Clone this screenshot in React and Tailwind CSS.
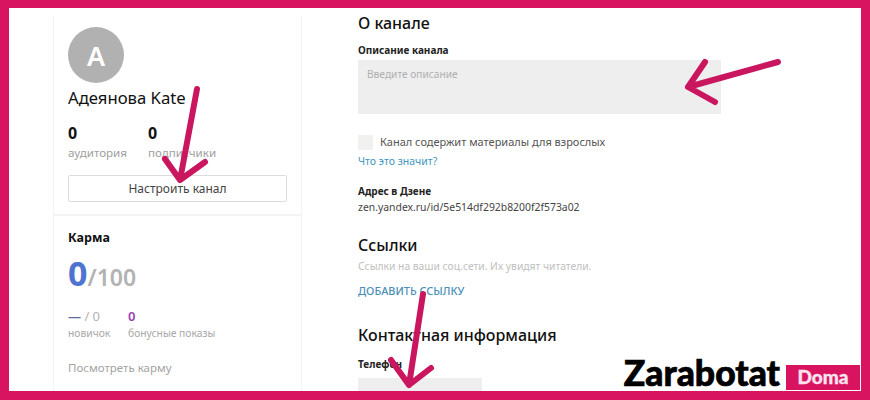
export default function App() {
  return (
    <div className="relative w-[870px] h-[400px] overflow-hidden bg-[#d81460] pt-[8px] pl-[9px] pr-[9px] pb-[9px] font-['Noto_Sans',sans-serif]">
      <div className="relative flex w-full h-full overflow-hidden bg-white">
        <aside className="ml-[44px] mt-[7px] w-[249px] h-[376px] shrink-0 border-x border-[#f3f3f3]">
          <div className="h-[201px] border-b-2 border-[#f3f3f3] pl-[14px] pr-[14px] pt-[12px]">
            <div className="w-[56px] h-[56px] rounded-full bg-[#b1b1b1] flex items-center justify-center text-white text-[27px] font-semibold leading-none">А</div>
            <div className="mt-[5px] text-[16.7px] leading-[20px] text-[#111]">Адеянова Kate</div>
            <div className="mt-[15px] flex">
              <div className="w-[80px]">
                <div className="text-[16px] leading-[20px] font-bold text-[#111]">0</div>
                <div className="mt-[2px] text-[11.6px] leading-[16px] text-[#a0a0a0]">аудитория</div>
              </div>
              <div>
                <div className="text-[16px] leading-[20px] font-bold text-[#111]">0</div>
                <div className="mt-[2px] text-[11.6px] leading-[16px] text-[#a0a0a0]">подписчики</div>
              </div>
            </div>
            <div className="mt-[14px] w-[219px] h-[27px] rounded-[2px] border border-[#dcdcdc] flex items-center justify-center text-[12px] text-[#444]">Настроить канал</div>
          </div>
          <div className="pl-[14px] pt-[13px]">
            <div className="text-[12.5px] leading-[18px] font-bold text-[#111]">Карма</div>
            <div className="mt-[4px] flex items-baseline h-[44px] leading-[44px]">
              <span className="text-[34px] font-bold text-[#4f74d0]">0</span>
              <span className="text-[23px] font-semibold text-[#b3b3b3]">/100</span>
            </div>
            <div className="mt-[12px] flex">
              <div className="w-[60px]">
                <div className="text-[13px] leading-[18px] text-[#b3b3b3]"><span className="text-[#5a6f9e] font-bold">—</span> / 0</div>
                <div className="text-[10.3px] leading-[16px] text-[#a8a8a8]">новичок</div>
              </div>
              <div>
                <div className="text-[13px] leading-[18px] font-semibold text-[#9b3fb5]">0</div>
                <div className="text-[10.3px] leading-[16px] text-[#a8a8a8]">бонусные показы</div>
              </div>
            </div>
            <div className="mt-[19px] text-[11.5px] leading-[16px] text-[#a3a3a3]">Посмотреть карму</div>
          </div>
        </aside>
        <main className="ml-[56px] w-[363px] shrink-0 pt-[4px]">
          <h2 className="text-[16px] leading-[22px] font-medium text-[#111]">О канале</h2>
          <div className="mt-[9px] text-[10px] leading-[14px] font-bold text-[#222]">Описание канала</div>
          <div className="mt-[3px] h-[54px] bg-[#eeeeee] pl-[9px] pt-[7px] text-[10.2px] leading-[14px] text-[#b0b0b0]">Введите описание</div>
          <div className="mt-[20px] flex items-center gap-[7px]">
            <div className="w-[15px] h-[15px] bg-[#f1f1ef]"></div>
            <span className="text-[11px] leading-[16px] text-[#555]">Канал содержит материалы для взрослых</span>
          </div>
          <div className="mt-[3px] text-[10.5px] leading-[16px] text-[#4296bf]">Что это значит?</div>
          <div className="mt-[15px] text-[10px] leading-[14px] font-bold text-[#222]">Адрес в Дзене</div>
          <div className="mt-[1px] text-[10.4px] leading-[16px] text-[#444]">zen.yandex.ru/id/5e514df292b8200f2f573a02</div>
          <h2 className="mt-[18px] text-[16px] leading-[24px] font-medium text-[#111]">Ссылки</h2>
          <div className="mt-[1px] text-[10.3px] leading-[16px] text-[#c0c0c0]">Ссылки на ваши соц.сети. Их увидят читатели.</div>
          <div className="mt-[9px] text-[10.9px] leading-[16px] font-medium text-[#4a8fb8]">ДОБАВИТЬ ССЫЛКУ</div>
          <h2 className="mt-[24px] text-[16px] leading-[24px] font-medium text-[#111]">Контактная информация</h2>
          <div className="mt-[10px] text-[10px] leading-[14px] font-bold text-[#222]">Телефон</div>
          <div className="mt-[7px] w-[124px] h-[16px] bg-[#eeeeee]"></div>
        </main>
      </div>
      <svg className="absolute left-0 top-0 pointer-events-none" width="870" height="400" viewBox="0 0 870 400" fill="none" stroke="#c9165f" strokeWidth="6" strokeLinecap="round" strokeLinejoin="round">
        <path d="M197 89 L180 180 M165 159 L180 180 L205 162" />
        <path d="M778 62 L688 87 M705 62 L688 87 L715 102" />
        <path d="M423 294 L409 385 M391 360 L409 385 L431 368" />
      </svg>
      <div className="absolute right-[10px] bottom-[10px] flex items-end gap-[6px]">
        <span className="text-[35.5px] leading-[42px] -mb-[4px] font-black text-black [-webkit-text-stroke:0.7px_black] font-['Lato',sans-serif]">Zarabotat</span>
        <span className="w-[74px] h-[25px] bg-[#d81460] flex items-center justify-center text-[19px] font-black [-webkit-text-stroke:0.3px_#fde3f0] text-[#fde3f0] font-['Lato',sans-serif]">Doma</span>
      </div>
    </div>
  );
}
